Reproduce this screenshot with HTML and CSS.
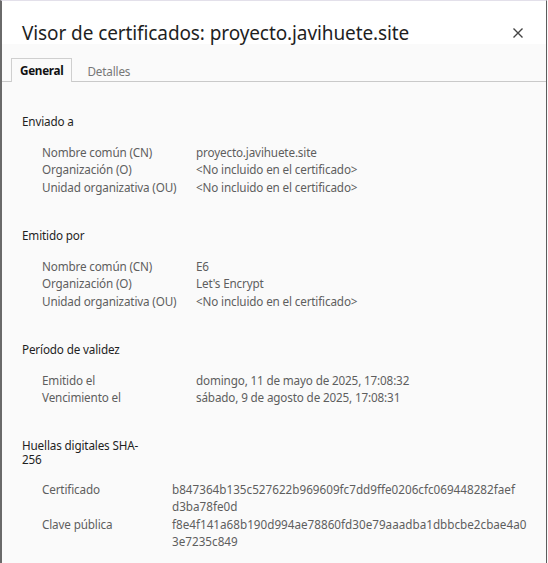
FILE: index.html
```html
<!DOCTYPE html>
<html lang="es">
<head>
<meta charset="utf-8">
<title>Visor de certificados</title>
<link rel="stylesheet" href="styles.css">
</head>
<body>
<div class="dialog">
  <header class="head">
    <h1 class="title">Visor de certificados: proyecto.javihuete.site</h1>
    <button class="close" aria-label="Cerrar">
      <svg width="10" height="10" viewBox="0 0 10 10"><path d="M0.5 0.5L9.5 9.5M9.5 0.5L0.5 9.5" stroke="#444" stroke-width="1.4" fill="none"/></svg>
    </button>
  </header>
  <nav class="tabs">
    <span class="tab active">General</span>
    <span class="tab">Detalles</span>
  </nav>
  <main class="content">
    <section class="sec">
      <h2 class="sec-title">Enviado a</h2>
      <div class="rows">
        <span class="lbl">Nombre común (CN)</span><span class="val">proyecto.javihuete.site</span>
        <span class="lbl">Organización (O)</span><span class="val">&lt;No incluido en el certificado&gt;</span>
        <span class="lbl">Unidad organizativa (OU)</span><span class="val">&lt;No incluido en el certificado&gt;</span>
      </div>
    </section>
    <section class="sec">
      <h2 class="sec-title">Emitido por</h2>
      <div class="rows">
        <span class="lbl">Nombre común (CN)</span><span class="val">E6</span>
        <span class="lbl">Organización (O)</span><span class="val">Let's Encrypt</span>
        <span class="lbl">Unidad organizativa (OU)</span><span class="val">&lt;No incluido en el certificado&gt;</span>
      </div>
    </section>
    <section class="sec">
      <h2 class="sec-title">Período de validez</h2>
      <div class="rows">
        <span class="lbl">Emitido el</span><span class="val">domingo, 11 de mayo de 2025, 17:08:32</span>
        <span class="lbl">Vencimiento el</span><span class="val">sábado, 9 de agosto de 2025, 17:08:31</span>
      </div>
    </section>
    <section class="sec">
      <h2 class="sec-title narrow">Huellas digitales SHA-<wbr>256</h2>
      <div class="rows hash">
        <span class="lbl">Certificado</span><span class="val">b847364b135c527622b969609fc7dd9ffe0206cfc069448282faef<wbr>d3ba78fe0d</span>
        <span class="lbl">Clave pública</span><span class="val">f8e4f141a68b190d994ae78860fd30e79aaadba1dbbcbe2cbae4a0<wbr>3e7235c849</span>
      </div>
    </section>
  </main>
</div>
</body>
</html>
```
FILE: styles.css
```css
html, body {
  margin: 0;
  padding: 0;
  height: 100%;
}
body {
  background: #fafafa;
  font-family: "Noto Sans", "Open Sans", sans-serif;
  font-size: 11.7px;
  letter-spacing: -0.15px;
  color: #222;
  overflow: hidden;
}
.dialog {
  height: 100%;
  box-sizing: border-box;
  border-top: 1px solid #e3e0ea;
  border-left: 2px solid #6a6a6a;
  border-right: 1px solid #5c5c5c;
  margin-right: 1px;
  background: #fafafa;
}
.head {
  background: #fff;
  height: 43px;
  display: flex;
  align-items: center;
  justify-content: space-between;
  padding: 0 23px 0 20px;
}
.title {
  margin: 0;
  font-size: 19px;
  letter-spacing: -0.1px;
  font-weight: 400;
  color: #1f1f1f;
  padding-top: 21px;
}
.close {
  border: 0;
  background: none;
  padding: 0;
  margin-top: 21px;
  width: 10px;
  height: 10px;
  display: flex;
}
.tabs {
  display: flex;
  height: 38px;
  align-items: flex-end;
  padding-left: 9px;
  border-bottom: 1px solid #c9c9c9;
  box-sizing: border-box;
}
.tab {
  height: 23px;
  line-height: 23px;
  padding: 0 9px 0 14px;
  color: #777;
  box-sizing: border-box;
  margin-bottom: -1px;
  border: 1px solid transparent;
  border-bottom: 0;
}
.tab.active {
  padding: 0 8px;
  color: #111;
  font-weight: 700;
  letter-spacing: -0.3px;
  border-color: #cfcfcf;
  background: #fafafa;
  height: 24px;
}
.content {
  padding: 33px 0 0 20px;
}
.sec + .sec {
  margin-top: 32.5px;
}
.sec:last-child {
  margin-top: 30.5px;
}
.sec-title {
  margin: 0;
  font-size: 11.7px;
  font-weight: 400;
  line-height: 13px;
  color: #1f1f1f;
}
.narrow {
  max-width: 135px;
  line-height: 14px;
}
.rows {
  margin-top: 15.75px;
  display: grid;
  grid-template-columns: 154px 1fr;
  padding-left: 20px;
  line-height: 17.6px;
  color: #5e5e5e;
}
.hash {
  margin-top: 15px;
}
.rows.hash {
  grid-template-columns: 130px 360px;
}
.hash .val {
  letter-spacing: 0;
  overflow-wrap: anywhere;
}
```
